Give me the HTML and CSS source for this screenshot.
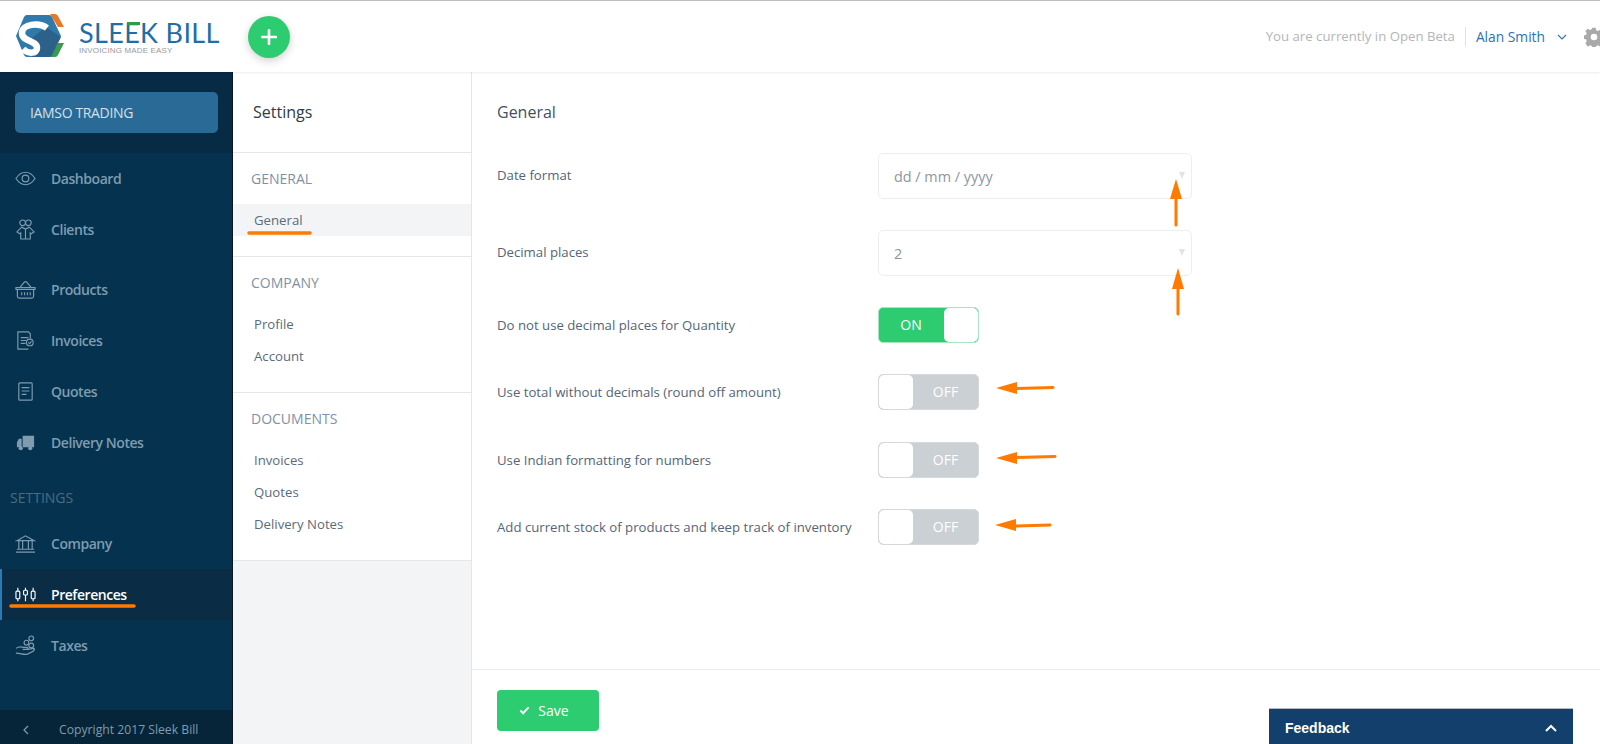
FILE: index.html
```html
<!DOCTYPE html>
<html lang="en">
<head>
<meta charset="utf-8">
<title>Sleek Bill - Settings</title>
<link rel="stylesheet" href="styles.css">
</head>
<body>
<header class="topbar">
  <div class="logo">
    <svg class="logo-mark" viewBox="0 0 51 46" width="51" height="46">
      <path d="M35 1h5q2 0 3 2l6 11h-6z" fill="#e8792b"/>
      <path d="M43 30h6l-6 12q-1 2-3 2h-5z" fill="#3c9a4c"/>
      <path d="M12 2h22q2 0 3 2l9 19-9 19q-1 2-3 2H12q-2 0-3-2L1 23 9 4q1-2 3-2z" fill="#2f79ab"/>
      <path d="M31 14l15 10-9 18q-1 2-3 2H17l5-9-5-10z" fill="#2c6189"/>
      <path d="M32 15C24 9 7 11 7 20c0 9 15 7 15 15 0 6-9 6-14 1" fill="none" stroke="#fff" stroke-width="6.500"/>
    </svg>
    <div class="logo-text">
      <span class="logo-name">SLEEK BILL</span>
      <span class="logo-tag">INVOICING MADE EASY</span>
    </div>
  </div>
  <button class="add-btn" aria-label="Add">
    <svg viewBox="0 0 16 16" width="16" height="16"><path d="M8 1v14M1 8h14" stroke="#fff" stroke-width="2.600" stroke-linecap="round"/></svg>
  </button>
  <div class="top-right">
    <span class="beta">You are currently in Open Beta</span>
    <span class="user">Alan Smith</span>
    <svg class="chev" viewBox="0 0 10 6" width="10" height="6"><path d="M1 1l4 4 4-4" fill="none" stroke="#2a72b5" stroke-width="1.100"/></svg>
    <svg class="gear" viewBox="0 0 24 24" width="20" height="20"><path fill="#a9a9a9" fill-rule="evenodd" d="M10 1h4l.6 3 2.200.9 2.600-1.700 2.800 2.800-1.700 2.600.9 2.200 3 .6v4l-3 .6-.9 2.200 1.700 2.600-2.800 2.800-2.600-1.700-2.200.9-.6 3h-4l-.6-3-2.200-.9-2.600 1.700L1.600 19.600l1.700-2.600-.9-2.200-3-.6v-4l3-.6.9-2.200L1.600 4.800 4.400 2l2.600 1.700 2.200-.9zM12 8a4 4 0 100 8 4 4 0 000-8z"/></svg>
  </div>
</header>

<div class="shell">
  <aside class="sidebar">
    <div class="brand"><div class="company-btn">IAMSO TRADING</div></div>
    <nav class="nav">
      <a class="nav-item"><svg class="ico" viewBox="0 0 22 22"><path d="M1 11c3-4.500 6.500-6.500 10-6.500S18 6.500 21 11c-3 4.500-6.500 6.500-10 6.500S4 15.500 1 11z"/><circle cx="11" cy="11" r="3.500"/></svg><span>Dashboard</span></a>
      <a class="nav-item"><svg class="ico" viewBox="0 0 22 22"><circle cx="8" cy="4" r="3"/><circle cx="14" cy="4" r="3"/><path d="M7 8.500l4 2 4-2 5 5-3 2-1-1v6.500H6v-6.500l-1 1-3-2zM11 10.500V21"/></svg><span>Clients</span></a>
      <div class="nav-gap"></div>
      <a class="nav-item"><svg class="ico" viewBox="0 0 22 22"><path d="M1 9h20v2H1zM2.500 11v7a2 2 0 002 2h13a2 2 0 002-2v-7M5 9l5-6h2l5 6M7 14v3M10 14v3M13 14v3M16 14v3"/></svg><span>Products</span></a>
      <a class="nav-item"><svg class="ico" viewBox="0 0 22 22"><path d="M14 20H3V2h11l2 2v5M6 8h8M6 11h6M6 14h5"/><circle cx="15.500" cy="13" r="3.500"/><path d="M14 13l1.200 1.200 2-2.200"/></svg><span>Invoices</span></a>
      <a class="nav-item"><svg class="ico" viewBox="0 0 22 22"><rect x="4" y="2" width="14" height="18" rx="1"/><path d="M7 7h8M7 10.500h8M7 14h5"/></svg><span>Quotes</span></a>
      <a class="nav-item"><svg class="ico" viewBox="0 0 22 22"><path class="solid" d="M8 4h12v12H8zM7 7H4l-2 4v5h5z"/><circle class="solid" cx="6" cy="17" r="2.200"/><circle class="solid" cx="16" cy="17" r="2.200"/></svg><span>Delivery Notes</span></a>
      <div class="nav-label">SETTINGS</div>
      <a class="nav-item"><svg class="ico" viewBox="0 0 22 22"><path d="M2 8l9-5 9 5zM4 8v9M8 8v9M14 8v9M18 8v9M2 17h18M1 20h20"/></svg><span>Company</span></a>
      <a class="nav-item active"><svg class="ico" viewBox="0 0 22 22"><path d="M3 4v14M11 4v14M19 4v14"/><rect x="1" y="7.500" width="4" height="8" rx="1" fill="#0a2c44"/><rect x="9" y="6.500" width="4" height="5" rx="1" fill="#0a2c44"/><rect x="17" y="7.500" width="4" height="8" rx="1" fill="#0a2c44"/></svg><span>Preferences</span></a>
      <a class="nav-item"><svg class="ico" viewBox="0 0 22 22"><circle cx="17" cy="3.500" r="2.500"/><circle cx="12" cy="8" r="2.500"/><circle cx="17" cy="11" r="2.500"/><path d="M1 14c3-2 5-2 8-1h3c2 0 2 2 0 2H8m5 0l7-1c1 1 0 2-1 3l-6 3c-4 1-7-1-12-1"/></svg><span>Taxes</span></a>
    </nav>
    <div class="copyright">
      <svg class="back" viewBox="0 0 6 10" width="6" height="10"><path d="M5 1L1 5l4 4" fill="none" stroke="#7f9bb0" stroke-width="1.200"/></svg>
      <span>Copyright 2017 Sleek Bill</span>
    </div>
  </aside>

  <section class="panel">
    <div class="panel-card">
      <h2 class="panel-title">Settings</h2>
      <div class="group">
        <div class="group-head">GENERAL</div>
        <a class="group-link current">General</a>
      </div>
      <div class="group">
        <div class="group-head">COMPANY</div>
        <a class="group-link">Profile</a>
        <a class="group-link">Account</a>
      </div>
      <div class="group">
        <div class="group-head">DOCUMENTS</div>
        <a class="group-link">Invoices</a>
        <a class="group-link">Quotes</a>
        <a class="group-link">Delivery Notes</a>
      </div>
    </div>
  </section>

  <main class="content">
    <div class="form">
      <h1 class="form-title">General</h1>
      <div class="row row-select">
        <label>Date format</label>
        <div class="select"><span>dd / mm / yyyy</span><i class="caret"></i></div>
      </div>
      <div class="row row-select">
        <label>Decimal places</label>
        <div class="select"><span>2</span><i class="caret"></i></div>
      </div>
      <div class="row row-toggle">
        <label>Do not use decimal places for Quantity</label>
        <div class="toggle on"><span class="toggle-text">ON</span><span class="knob"></span></div>
      </div>
      <div class="row row-toggle">
        <label>Use total without decimals (round off amount)</label>
        <div class="toggle"><span class="knob"></span><span class="toggle-text">OFF</span></div>
      </div>
      <div class="row row-toggle">
        <label>Use Indian formatting for numbers</label>
        <div class="toggle"><span class="knob"></span><span class="toggle-text">OFF</span></div>
      </div>
      <div class="row row-toggle">
        <label>Add current stock of products and keep track of inventory</label>
        <div class="toggle"><span class="knob"></span><span class="toggle-text">OFF</span></div>
      </div>
    </div>
    <div class="actions">
      <button class="save">
        <svg viewBox="0 0 12 10" width="11" height="9"><path d="M1.500 5l3 3 6-6.500" fill="none" stroke="#fff" stroke-width="2.200"/></svg>
        Save
      </button>
    </div>
  </main>
</div>

<div class="feedback">
  <span>Feedback</span>
  <svg viewBox="0 0 12 8" width="12" height="8"><path d="M1 7l5-5 5 5" fill="none" stroke="#fff" stroke-width="2"/></svg>
</div>

<svg class="marks" width="1600" height="744" viewBox="0 0 1600 744">
  <g stroke="#ff7a00" stroke-width="3" stroke-linecap="round" fill="#ff7a00">
    <path d="M11 606h123" stroke-width="3.500"/>
    <path d="M249 233h61" stroke-width="3.500"/>
    <path d="M1176 225v-35" />
    <path d="M1178 314v-38" />
    <path d="M1015 388.500l38-1" />
    <path d="M1015 457.500l40-1" />
    <path d="M1015 526l35-1" />
  </g>
  <g fill="#ff7a00">
    <path d="M1176 179l-6 20h12z"/>
    <path d="M1178 268l-6 21h12z"/>
    <path d="M996 388l21-6v12z"/>
    <path d="M996 458l21-6v12z"/>
    <path d="M995 525l21-6v12z"/>
  </g>
</svg>
</body>
</html>
```
FILE: styles.css
```css
* { box-sizing: border-box; }
html, body { margin: 0; height: 744px; overflow: hidden; }
body {
  position: relative;
  font-family: "Open Sans", "Liberation Sans", sans-serif;
  font-size: 13.2px;
  color: #54657a;
  background: #fff;
  border-top: 1px solid #bdbdbd;
  display: flex;
  flex-direction: column;
}

/* top bar */
.topbar {
  height: 71px;
  flex: none;
  display: flex;
  align-items: center;
  background: #fff;
  padding-left: 15px;
  box-shadow: 0 1px 2px rgba(0,0,0,.08);
  position: relative;
  z-index: 2;
}
.logo { display: flex; align-items: center; width: 233px; }
.logo-mark { flex: none; margin: -2px 13px 0 0; }
.logo-text { display: flex; flex-direction: column; margin-top: 1px; }
.logo-name {
  position: relative;
  font-family: Lato, "Liberation Sans", sans-serif;
  font-size: 27px;
  line-height: 26px;
  letter-spacing: .35px;
  color: #1f6ea6;
  white-space: nowrap;
}
.logo-name::after {
  content: "";
  position: absolute;
  left: 48px;
  top: 2px;
  width: 13px;
  height: 3px;
  background: #2f9a4a;
}
.logo-tag {
  font-family: "Liberation Sans", sans-serif;
  font-size: 8px;
  line-height: 9px;
  letter-spacing: .15px;
  color: #9a9a9a;
  white-space: nowrap;
}
.add-btn {
  width: 42px;
  height: 42px;
  border: 0;
  border-radius: 50%;
  background: #2ecc71;
  box-shadow: 0 3px 8px rgba(0,0,0,.18);
  padding: 0;
  display: flex;
  align-items: center;
  justify-content: center;
}
.top-right {
  margin-left: auto;
  display: flex;
  align-items: center;
  margin-right: -4px;
}
.beta {
  color: #b3b6b9;
  font-size: 13.2px;
  padding-right: 10px;
  border-right: 1px solid #dfe3e6;
  line-height: 19px;
}
.user { color: #2a72b5; font-size: 13.8px; margin-left: 10px; font-weight: 500; }
.chev { margin-left: 12px; }
.gear { margin-left: 17px; }

/* shell */
.shell { flex: 1; display: flex; min-height: 0; }

/* sidebar */
.sidebar {
  width: 233px;
  flex: none;
  background: #05334f;
  border-right: 1px solid #0a1626;
  display: flex;
  flex-direction: column;
}
.brand {
  height: 81px;
  flex: none;
  background: #072b45;
  padding: 20px 14px 0 15px;
}
.company-btn {
  height: 41px;
  border-radius: 5px;
  background: #2a6a97;
  color: #d3e0ea;
  font-size: 14px;
  line-height: 41px;
  padding-left: 15px;
  letter-spacing: -.35px;
}
.nav { flex: 1; }
.nav-item {
  height: 51px;
  display: flex;
  align-items: center;
  padding-left: 15px;
  color: #7f9bb0;
  font-size: 14px;
  font-weight: 600;
  letter-spacing: -.45px;
}
.nav-item span { margin: -1px 0 0 15px; }
.ico {
  width: 21px;
  height: 21px;
  flex: none;
  fill: none;
  stroke: #7f9bb0;
  stroke-width: 1.2;
}
.ico .solid { fill: #7f9bb0; stroke: none; }
.nav-gap { height: 9px; }
.nav-label {
  height: 50px;
  padding: 21px 0 0 10px;
  color: #4b6b80;
  font-size: 14px;
  line-height: 18px;
}
.nav-item.active {
  background: #0a2c44;
  border-left: 2px solid #2a7ab5;
  padding-left: 13px;
  color: #fff;
}
.nav-item.active .ico { stroke: #fff; }
.copyright {
  height: 34px;
  flex: none;
  background: #072539;
  display: flex;
  align-items: center;
  padding: 5px 0 0 23px;
  color: #7f9bb0;
  font-size: 12.2px;
}
.back { margin-right: 30px; }

/* settings panel */
.panel {
  width: 239px;
  flex: none;
  background: #f3f4f6;
  border-right: 1px solid #e4e6e8;
}
.panel-card { background: #fff; border-bottom: 1px solid #e4e6e8; }
.panel-title {
  margin: 0;
  height: 80px;
  padding-left: 20px;
  font-size: 16px;
  font-weight: 400;
  line-height: 80px;
  color: #2f3b49;
}
.group {
  border-top: 1px solid #e4e6e8;
  padding: 16px 0 20px;
}
.group-head {
  padding-left: 18px;
  height: 35px;
  color: #7d92a8;
  font-size: 14px;
  line-height: 20px;
}
.group-link {
  display: block;
  height: 32px;
  line-height: 32px;
  padding-left: 21px;
  font-size: 13.2px;
  color: #5a6b7e;
}
.group-link.current { background: #f3f4f6; }

/* main */
.content { flex: 1; display: flex; flex-direction: column; min-width: 0; }
.form { height: 597px; padding: 0 25px; }
.form-title {
  margin: 0;
  height: 81px;
  font-size: 16px;
  font-weight: 400;
  line-height: 80px;
  color: #42505f;
}
.row { display: flex; align-items: center; }
.row label { width: 381px; flex: none; color: #54657a; font-size: 13.2px; }
.row-select { height: 46px; margin-bottom: 31px; }
.row-select label { margin-top: -2px; }
.select {
  width: 314px;
  height: 46px;
  border: 1px solid #eceef0;
  border-radius: 5px;
  padding-left: 15px;
  display: flex;
  align-items: center;
  justify-content: space-between;
  color: #8d96a0;
  font-size: 14.4px;
}
.caret {
  width: 0;
  height: 0;
  border-left: 3.5px solid transparent;
  border-right: 3.5px solid transparent;
  border-top: 7px solid #e0e4e6;
  margin-right: 6px;
  margin-top: -2px;
}
.row-toggle { height: 36px; margin-bottom: 31.4px; }
.toggle {
  width: 101px;
  height: 36px;
  border-radius: 5px;
  background: #cbd0d4;
  border: 1px solid #d5d9dc;
  display: flex;
  align-items: stretch;
  color: #fff;
  font-size: 14px;
  overflow: hidden;
}
.toggle .knob {
  width: 34px;
  flex: none;
  background: #fff;
  border-radius: 5px;
}
.toggle-text { flex: 1; text-align: center; line-height: 34px; }
.toggle.on { background: #2ecc71; border-color: #a8e6c1; }
.toggle.on .toggle-text { padding-right: 1px; }

.actions {
  flex: 1;
  border-top: 1px solid #e8eaec;
  padding: 20px 0 0 25px;
}
.save {
  width: 102px;
  height: 41px;
  border: 0;
  border-radius: 4px;
  background: #2ecc71;
  color: #fff;
  font-family: inherit;
  font-size: 14px;
  font-weight: 500;
  display: flex;
  align-items: center;
  justify-content: center;
  gap: 8px;
  padding: 0 8px 0 0;
}

/* floating */
.feedback {
  position: absolute;
  right: 27px;
  top: 707px;
  width: 304px;
  height: 36px;
  background: #123f6b;
  border-top: 1px solid #b5bcc6;
  color: #fff;
  font-family: "Liberation Sans", sans-serif;
  font-weight: 700;
  font-size: 14px;
  display: flex;
  align-items: center;
  justify-content: space-between;
  padding: 2px 16px 0;
  z-index: 3;
}
.marks { position: absolute; left: 0; top: -1px; pointer-events: none; z-index: 4; }
```
